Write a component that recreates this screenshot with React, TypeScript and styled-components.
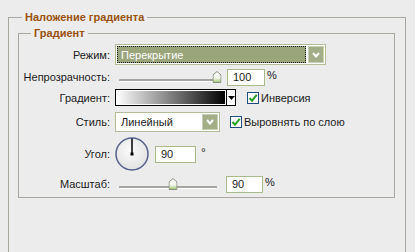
import React from "react";
import styled, { createGlobalStyle } from "styled-components";

const GlobalStyle = createGlobalStyle`
  html, body {
    margin: 0;
    padding: 0;
    background: #ececec;
    overflow: hidden;
  }
  body {
    font-family: "Liberation Sans", Arial, sans-serif;
    font-size: 11px;
    color: #1b1b1b;
  }
`;

function Chevron() {
  return (
    <svg width="10" height="8" viewBox="0 0 10 8">
      <polyline points="2,2 5,5.5 8,2" fill="none" stroke="#fff" strokeWidth="2" />
    </svg>
  );
}

function Tick() {
  return (
    <svg width="10" height="10" viewBox="0 0 10 10">
      <path d="M1.5 5 L4 7.8 L8.7 1.8" fill="none" stroke="#23a023" strokeWidth="2" />
    </svg>
  );
}

function Thumb() {
  return (
    <svg width="9" height="12" viewBox="0 0 9 12">
      <defs>
        <linearGradient id="th" x1="0" y1="0" x2="0" y2="1">
          <stop offset="0" stopColor="#ffffff" />
          <stop offset="0.6" stopColor="#f2f5ea" />
          <stop offset="1" stopColor="#9cc46a" />
        </linearGradient>
      </defs>
      <path d="M0.5 4 L4.5 0.5 L8.5 4 V11.5 H0.5 Z" fill="url(#th)" stroke="#8a8f80" strokeWidth="1" />
    </svg>
  );
}

function Dial() {
  return (
    <svg width="34" height="34" viewBox="0 0 34 34">
      <defs>
        <radialGradient id="dial" cx="0.45" cy="0.4" r="0.6">
          <stop offset="0" stopColor="#fbfbfb" />
          <stop offset="1" stopColor="#e2e2e2" />
        </radialGradient>
      </defs>
      <circle cx="17" cy="17" r="16" fill="url(#dial)" stroke="#55638c" strokeWidth="1.5" />
      <line x1="17" y1="17" x2="17" y2="1.5" stroke="#000" strokeWidth="1.5" />
      <rect x="15.5" y="15.5" width="3" height="3" fill="#000" />
    </svg>
  );
}

function App() {
  return (
    <>
      <GlobalStyle />
      <Page>
        <OuterSet>
          <Legend>Наложение градиента</Legend>
          <InnerSet>
            <Legend $inner>Градиент</Legend>

            <Row $h={21} $mt={0}>
              <Label>Режим:</Label>
              <Controls>
                <SelectFrame $w={211}>
                  <SelectField $active>Перекрытие</SelectField>
                  <SelectButton>
                    <Chevron />
                  </SelectButton>
                </SelectFrame>
              </Controls>
            </Row>

            <Row $h={18} $mt={3}>
              <Label>Непрозрачность:</Label>
              <Controls>
                <Slider>
                  <Track />
                  <ThumbWrap style={{ left: 4 + 98 * 1 }}>
                    <Thumb />
                  </ThumbWrap>
                </Slider>
                <NumInput $w={38} $ml={8}>100</NumInput>
                <Unit>%</Unit>
              </Controls>
            </Row>

            <Row $h={17} $mt={3}>
              <Label>Градиент:</Label>
              <Controls>
                <GradientBox />
                <GradientArrow>
                  <svg width="7" height="4" viewBox="0 0 7 4">
                    <path d="M0 0 H7 L3.5 4 Z" fill="#000" />
                  </svg>
                </GradientArrow>
                <CheckBox $ml={11}>
                  <Tick />
                </CheckBox>
                <CheckLabel>Инверсия</CheckLabel>
              </Controls>
            </Row>

            <Row $h={20} $mt={6}>
              <Label>Стиль:</Label>
              <Controls>
                <SelectFrame $w={105}>
                  <SelectField>Линейный</SelectField>
                  <SelectButton>
                    <Chevron />
                  </SelectButton>
                </SelectFrame>
                <CheckBox $ml={10}>
                  <Tick />
                </CheckBox>
                <CheckLabel>Выровнять по слою</CheckLabel>
              </Controls>
            </Row>

            <Row $h={34} $mt={5}>
              <Label>Угол:</Label>
              <Controls>
                <Dial />
                <NumInput $w={41} $ml={6}>90</NumInput>
                <Degree>°</Degree>
              </Controls>
            </Row>

            <Row $h={18} $mt={4}>
              <Label>Масштаб:</Label>
              <Controls>
                <Slider>
                  <Track />
                  <ThumbWrap style={{ left: 4 + 98 * 0.556 }}>
                    <Thumb />
                  </ThumbWrap>
                </Slider>
                <NumInput $w={37} $ml={7}>90</NumInput>
                <Unit>%</Unit>
              </Controls>
            </Row>
          </InnerSet>
        </OuterSet>
      </Page>
    </>
  );
}

export default App;

const Page = styled.div`
  padding: 11px 0 0 8px;
`;

const OuterSet = styled.fieldset`
  margin: 0;
  padding: 3px 10px 0 9px;
  width: 398px;
  height: 300px;
  box-sizing: border-box;
  min-width: 0;
  border: 1px solid #a8a8a0;
`;

const InnerSet = styled.fieldset`
  margin: 0;
  padding: 4px 0 4px 0;
  width: 377px;
  box-sizing: border-box;
  min-width: 0;
  border: 1px solid #a8a8a0;
`;

const Legend = styled.legend<{ $inner?: boolean }>`
  margin-left: ${(p) => (p.$inner ? "12px" : "4px")};
  padding: 0 3px;
  font-weight: bold;
  font-size: 11px;
  line-height: 13px;
  color: #9a520f;
`;

const Row = styled.div<{ $h: number; $mt: number }>`
  display: grid;
  grid-template-columns: 91px auto;
  column-gap: 5px;
  align-items: center;
  height: ${(p) => p.$h}px;
  margin-top: ${(p) => p.$mt}px;
`;

const Label = styled.label`
  text-align: right;
  white-space: nowrap;
`;

const Controls = styled.div`
  display: flex;
  align-items: center;
  height: 100%;
`;

const SelectFrame = styled.div<{ $w: number }>`
  display: flex;
  gap: 2px;
  width: ${(p) => p.$w}px;
  height: 100%;
  box-sizing: border-box;
  padding: 1px;
  border: 1px solid #b3be98;
  background: #fff;
`;

const SelectField = styled.div<{ $active?: boolean }>`
  flex: 1;
  display: flex;
  align-items: center;
  padding-left: 3px;
  box-sizing: border-box;
  border: 1px ${(p) => (p.$active ? "dotted #1a1a1a" : "solid transparent")};
  background: ${(p) => (p.$active ? "#9ba57b" : "#fff")};
  color: ${(p) => (p.$active ? "#fff" : "#1b1b1b")};
  white-space: nowrap;
`;

const SelectButton = styled.div`
  width: 16px;
  display: flex;
  align-items: center;
  justify-content: center;
  box-sizing: border-box;
  background: #a3ad87;
  border: 1px solid #c9d1b4;
`;

const Slider = styled.div`
  position: relative;
  width: 104px;
  height: 100%;
`;

const Track = styled.div`
  position: absolute;
  left: 4px;
  right: 2px;
  top: 50%;
  height: 2px;
  margin-top: 2px;
  border-radius: 1px;
  background: #a4a4a0;
  border-bottom: 1px solid #fff;
`;

const ThumbWrap = styled.div`
  position: absolute;
  top: 3px;
  transform: translateX(-50%);
  line-height: 0;
`;

const NumInput = styled.div<{ $w: number; $ml: number }>`
  width: ${(p) => p.$w}px;
  height: 17px;
  margin-left: ${(p) => p.$ml}px;
  box-sizing: border-box;
  padding-left: 5px;
  display: flex;
  align-items: center;
  background: #fff;
  border: 1px solid #a9bb8d;
`;

const Unit = styled.span`
  margin-left: 2px;
  margin-bottom: 4px;
`;

const Degree = styled.span`
  margin-left: 5px;
  align-self: flex-start;
  margin-top: 9px;
  font-size: 12px;
`;

const GradientBox = styled.div`
  width: 112px;
  height: 100%;
  box-sizing: border-box;
  border: 1px solid #000;
  box-shadow: inset 0 0 0 1px #fff;
  background: linear-gradient(to right, #ffffff 0%, #000000 100%);
`;

const GradientArrow = styled.div`
  width: 9px;
  height: 100%;
  box-sizing: border-box;
  border: 1px solid #000;
  border-left: none;
  background: #fff;
  display: flex;
  align-items: center;
  justify-content: center;
`;

const CheckBox = styled.div<{ $ml: number }>`
  width: 12px;
  height: 12px;
  margin-left: ${(p) => p.$ml}px;
  box-sizing: border-box;
  border: 1px solid #1f4e7c;
  background: #fff;
  display: flex;
  align-items: center;
  justify-content: center;
`;

const CheckLabel = styled.span`
  margin-left: 2px;
  white-space: nowrap;
`;
